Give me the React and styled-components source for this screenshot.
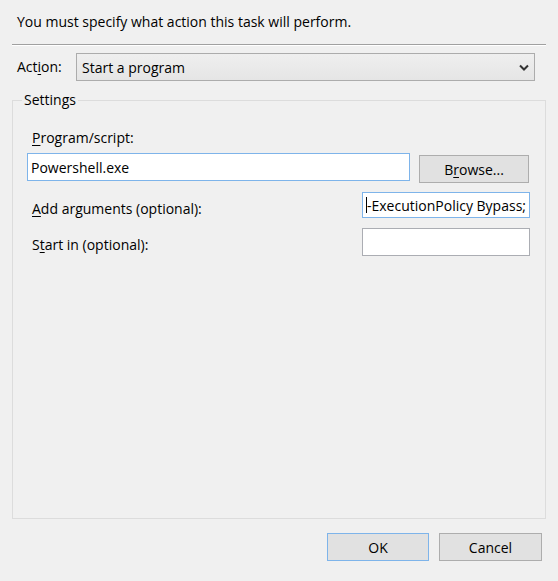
import React from 'react';
import styled, { createGlobalStyle } from 'styled-components';

const GlobalStyle = createGlobalStyle`
  html, body {
    margin: 0;
    padding: 0;
    background: #f0f0f0;
  }
  body {
    font-family: "Open Sans", "Noto Sans", sans-serif;
    font-size: 14px;
    color: #000;
  }
`;

const Dialog = styled.div`
  width: 558px;
  height: 581px;
  box-sizing: border-box;
  padding: 0 12px;
  display: flex;
  flex-direction: column;
  background: #f0f0f0;
`;

const Intro = styled.div`
  margin: 13px 0 0 5px;
  line-height: 18px;
`;

const Divider = styled.div`
  margin-top: 13px;
  height: 1px;
  background: #a0a0a0;
  border-bottom: 1px solid #ffffff;
`;

const ActionRow = styled.div`
  display: flex;
  align-items: center;
  margin-top: 7px;
  padding-left: 5px;
`;

const ActionLabel = styled.span`
  width: 59px;
  line-height: 18px;
`;

const Accel = styled.span`
  text-decoration: underline;
  text-underline-offset: 2px;
`;

const Select = styled.div`
  width: 459px;
  height: 28px;
  box-sizing: border-box;
  border: 1px solid #acacac;
  background: linear-gradient(#efefef, #e5e5e5);
  display: flex;
  align-items: center;
  justify-content: space-between;
  padding: 0 5px 0 5px;

  svg {
    width: 10px;
    height: 7px;
  }
`;

const Group = styled.fieldset`
  margin: 10px 0 0;
  height: 428px;
  box-sizing: border-box;
  border: 1px solid #dcdcdc;
  padding: 20px 15px 0 14px;
  display: flex;
  flex-direction: column;
`;

const Legend = styled.legend`
  padding: 0 2px;
  margin-left: -5px;
  line-height: 18px;
`;

const FieldLabel = styled.div`
  padding-left: 5px;
  line-height: 18px;
  margin-top: ${(p) => p.$top || 0}px;
`;

const InputRow = styled.div`
  display: flex;
  align-items: flex-start;
  justify-content: space-between;
  margin-top: ${(p) => p.$top || 0}px;
`;

const TextBox = styled.div`
  width: ${(p) => p.$w}px;
  height: ${(p) => p.$h || 28}px;
  box-sizing: border-box;
  border: 1px solid ${(p) => (p.$active ? '#7eb4ea' : '#abadb3')};
  background: #fff;
  display: flex;
  align-items: center;
  padding: 0 3px;
  overflow: hidden;
  white-space: nowrap;
`;

const Caret = styled.span`
  flex: none;
  width: 1px;
  height: 16px;
  background: #000;
`;

const Button = styled.div`
  width: ${(p) => p.$w || 110}px;
  height: 28px;
  box-sizing: border-box;
  border: 1px solid ${(p) => (p.$primary ? '#7eb4ea' : '#adadad')};
  background: #e1e1e1;
  display: flex;
  align-items: center;
  justify-content: center;
  margin-top: ${(p) => p.$top || 0}px;
  margin-right: ${(p) => p.$right || 0}px;
`;

const Footer = styled.div`
  display: flex;
  justify-content: flex-end;
  gap: 10px;
  margin-top: 14px;
  padding-right: 4px;
`;

export default function App() {
  return (
    <>
      <GlobalStyle />
      <Dialog>
        <Intro>You must specify what action this task will perform.</Intro>
        <Divider />
        <ActionRow>
          <ActionLabel>
            Act<Accel>i</Accel>on:
          </ActionLabel>
          <Select>
            <span>Start a program</span>
            <svg viewBox="0 0 10 7">
              <path d="M1 1.5 L5 5.5 L9 1.5" fill="none" stroke="#333" strokeWidth="2" />
            </svg>
          </Select>
        </ActionRow>
        <Group>
          <Legend>Settings</Legend>
          <FieldLabel>
            <Accel>P</Accel>rogram/script:
          </FieldLabel>
          <InputRow $top={6}>
            <TextBox $w={383} $active>
              Powershell.exe
            </TextBox>
            <Button $w={110} $top={2} $right={1}>
              B<Accel>r</Accel>owse...
            </Button>
          </InputRow>
          <InputRow $top={9}>
            <FieldLabel $top={8}>
              <Accel>A</Accel>dd arguments (optional):
            </FieldLabel>
            <TextBox $w={168} $h={26} $active>
              <Caret />
              -ExecutionPolicy Bypass;
            </TextBox>
          </InputRow>
          <InputRow $top={10}>
            <FieldLabel $top={8}>
              S<Accel>t</Accel>art in (optional):
            </FieldLabel>
            <TextBox $w={168} />
          </InputRow>
        </Group>
        <Footer>
          <Button $w={102} $primary>
            OK
          </Button>
          <Button $w={103}>Cancel</Button>
        </Footer>
      </Dialog>
    </>
  );
}
